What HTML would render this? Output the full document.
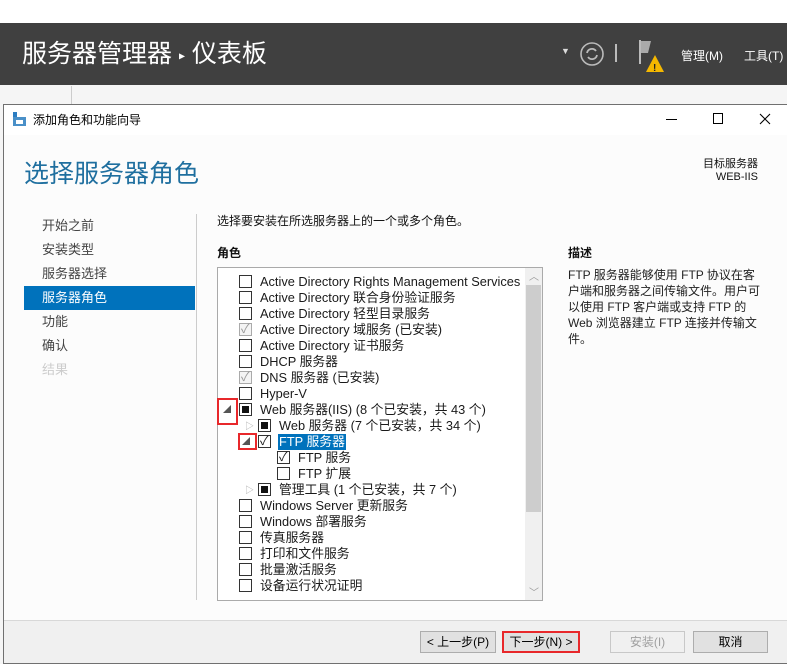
<!DOCTYPE html>
<html><head><meta charset="utf-8"><style>
*{margin:0;padding:0;box-sizing:border-box}
body{width:787px;height:664px;overflow:hidden;background:#fff;font-family:"Liberation Sans","Noto Sans CJK SC",sans-serif;position:relative}
.a{position:absolute;white-space:nowrap}
.hdr{left:0;top:23px;width:787px;height:62px;background:#404040}
.cb{position:absolute;width:13px;height:13px;border:1px solid #333;background:#fff}
.cb.g{border-color:#aaa;background:#f4f4f4}
.cb.f::after{content:"";position:absolute;left:2px;top:2px;width:7px;height:7px;background:#111}
.t{position:absolute;font-size:12.8px;color:#1a1a1a;line-height:16px}
.btn{position:absolute;top:631px;height:22px;border:1px solid #adadad;background:#e1e1e1;font-size:12px;text-align:center;line-height:20px;color:#000}
</style></head><body>
<div class="a hdr"></div>
<div class="a" style="left:22px;top:37px;font-size:25px;color:#fff;line-height:34px">服务器管理器 <span style="font-size:12px;vertical-align:middle">▸</span> 仪表板</div>
<div class="a" style="left:561px;top:46px;color:#ddd;font-size:9px">▼</div>
<svg class="a" style="left:579px;top:40px" width="26" height="28"><circle cx="13" cy="14" r="11" fill="none" stroke="#bbb" stroke-width="1.6"/><path d="M8 13a5 5 0 0 1 9-2M18 15a5 5 0 0 1-9 2" stroke="#bbb" stroke-width="1.8" fill="none"/></svg>
<div class="a" style="left:615px;top:44px;width:2px;height:18px;background:#bbb"></div>
<svg class="a" style="left:636px;top:38px" width="34" height="40"><path d="M4 2v24" stroke="#bbb" stroke-width="2"/><path d="M5 3h10l-3 12H5z" fill="#aaa"/><path d="M19 17l9 17H10z" fill="#f5b800"/><text x="17" y="33" font-size="10" font-weight="bold" fill="#222">!</text></svg>
<div class="a" style="left:681px;top:47px;font-size:12px;color:#fff">管理(M)</div>
<div class="a" style="left:744px;top:47px;font-size:12px;color:#fff">工具(T)</div>
<div class="a" style="left:0;top:85px;width:787px;height:20px;background:#f5f5f5"></div>
<div class="a" style="left:71px;top:86px;width:1px;height:18px;background:#ccc"></div>
<div class="a" style="left:0;top:104px;width:3px;height:560px;background:#f5f5f5"></div>
<div class="a" style="left:3px;top:104px;width:784px;height:560px;background:#fcfcfc;border:1px solid #707070;border-right:none"></div>
<div class="a" style="left:4px;top:105px;width:783px;height:30px;background:#fff"></div>
<svg class="a" style="left:12px;top:111px" width="16" height="16"><rect x="1" y="1" width="4" height="5" fill="#2b7cc1"/><rect x="1" y="6" width="13" height="9" fill="#4a90c8"/><rect x="4" y="9" width="7" height="4" fill="#fff"/></svg>
<div class="a" style="left:33px;top:111px;font-size:12px;color:#000">添加角色和功能向导</div>
<div class="a" style="left:666px;top:119px;width:11px;height:1px;background:#000"></div>
<div class="a" style="left:713px;top:113px;width:10px;height:11px;border:1px solid #000"></div>
<svg class="a" style="left:759px;top:113px" width="12" height="12"><path d="M1 1L11 11M11 1L1 11" stroke="#000" stroke-width="1.1"/></svg>
<div class="a" style="left:24px;top:157px;font-size:25px;color:#1f6f9f;line-height:34px">选择服务器角色</div>
<div class="a" style="left:690px;top:158px;width:68px;text-align:right;font-size:11px;color:#111;line-height:13px">目标服务器<br>WEB-IIS</div>
<div class="a" style="left:24px;top:286px;width:171px;height:24px;background:#0072bc"></div>
<div class="a" style="left:42px;top:214px;font-size:13px;color:#444;line-height:24px">开始之前<br>安装类型<br>服务器选择<br><span style="color:#fff">服务器角色</span><br>功能<br>确认<br><span style="color:#ccc">结果</span></div>
<div class="a" style="left:196px;top:214px;width:1px;height:386px;background:#ccc"></div>
<div class="a" style="left:217px;top:212px;font-size:12px;color:#111">选择要安装在所选服务器上的一个或多个角色。</div>
<div class="a" style="left:217px;top:244px;font-size:12px;font-weight:bold;color:#111">角色</div>
<div class="a" style="left:568px;top:244px;font-size:12px;font-weight:bold;color:#111">描述</div>
<div class="a" style="left:568px;top:267px;width:195px;font-size:12px;color:#222;line-height:16px;white-space:normal">FTP 服务器能够使用 FTP 协议在客户端和服务器之间传输文件。用户可以使用 FTP 客户端或支持 FTP 的 Web 浏览器建立 FTP 连接并传输文件。</div>
<div class="a" style="left:217px;top:267px;width:326px;height:334px;background:#fff;border:1px solid #aaa"></div>
<div class="a" style="left:525px;top:268px;width:17px;height:332px;background:#f0f0f0"></div>
<div class="a" style="left:526px;top:285px;width:15px;height:227px;background:#cdcdcd"></div>
<div class="a" style="left:529px;top:268px;font-size:10px;color:#999">︿</div>
<div class="a" style="left:529px;top:584px;font-size:10px;color:#999">﹀</div>
<div class="cb" style="left:239px;top:275px"></div><div class="t" style="left:260px;top:274px">Active Directory Rights Management Services</div>
<div class="cb" style="left:239px;top:291px"></div><div class="t" style="left:260px;top:290px">Active Directory 联合身份验证服务</div>
<div class="cb" style="left:239px;top:307px"></div><div class="t" style="left:260px;top:306px">Active Directory 轻型目录服务</div>
<div class="cb g" style="left:239px;top:323px"></div><div class="t" style="left:241px;top:321px;color:#999">✓</div><div class="t" style="left:260px;top:322px">Active Directory 域服务 (已安装)</div>
<div class="cb" style="left:239px;top:339px"></div><div class="t" style="left:260px;top:338px">Active Directory 证书服务</div>
<div class="cb" style="left:239px;top:355px"></div><div class="t" style="left:260px;top:354px">DHCP 服务器</div>
<div class="cb g" style="left:239px;top:371px"></div><div class="t" style="left:241px;top:369px;color:#999">✓</div><div class="t" style="left:260px;top:370px">DNS 服务器 (已安装)</div>
<div class="cb" style="left:239px;top:387px"></div><div class="t" style="left:260px;top:386px">Hyper-V</div>
<div class="t" style="left:223px;top:402px;font-size:8px;color:#555">◢</div>
<div class="cb f" style="left:239px;top:403px"></div><div class="t" style="left:260px;top:402px">Web 服务器(IIS) (8 个已安装，共 43 个)</div>
<div class="t" style="left:245px;top:418px;font-size:9px;color:#aaa">▷</div>
<div class="cb f" style="left:258px;top:419px"></div><div class="t" style="left:279px;top:418px">Web 服务器 (7 个已安装，共 34 个)</div>
<div class="t" style="left:242px;top:434px;font-size:8px;color:#555">◢</div>
<div class="cb" style="left:258px;top:435px"></div><div class="t" style="left:260px;top:433px">✓</div>
<div class="t" style="left:278px;top:434px;background:#0072bc;color:#fff;padding:0 1px">FTP 服务器</div>
<div class="cb" style="left:277px;top:451px"></div><div class="t" style="left:279px;top:449px">✓</div><div class="t" style="left:298px;top:450px">FTP 服务</div>
<div class="cb" style="left:277px;top:467px"></div><div class="t" style="left:298px;top:466px">FTP 扩展</div>
<div class="t" style="left:245px;top:482px;font-size:9px;color:#aaa">▷</div>
<div class="cb f" style="left:258px;top:483px"></div><div class="t" style="left:279px;top:482px">管理工具 (1 个已安装，共 7 个)</div>
<div class="cb" style="left:239px;top:499px"></div><div class="t" style="left:260px;top:498px">Windows Server 更新服务</div>
<div class="cb" style="left:239px;top:515px"></div><div class="t" style="left:260px;top:514px">Windows 部署服务</div>
<div class="cb" style="left:239px;top:531px"></div><div class="t" style="left:260px;top:530px">传真服务器</div>
<div class="cb" style="left:239px;top:547px"></div><div class="t" style="left:260px;top:546px">打印和文件服务</div>
<div class="cb" style="left:239px;top:563px"></div><div class="t" style="left:260px;top:562px">批量激活服务</div>
<div class="cb" style="left:239px;top:579px"></div><div class="t" style="left:260px;top:578px">设备运行状况证明</div>
<div class="a" style="left:217px;top:398px;width:21px;height:27px;border:2px solid #e8282b"></div>
<div class="a" style="left:238px;top:433px;width:19px;height:17px;border:2px solid #e8282b"></div>
<div class="a" style="left:4px;top:620px;width:783px;height:43px;background:#f0f0f0;border-top:1px solid #d8d8d8"></div>
<div class="btn" style="left:420px;width:76px">&lt; 上一步(P)</div>
<div class="btn" style="left:502px;width:78px;border:2px solid #e8282b;line-height:18px">下一步(N) &gt;</div>
<div class="btn" style="left:610px;width:75px;background:#f0f0f0;border-color:#c8c8c8;color:#a0a0a0">安装(I)</div>
<div class="btn" style="left:693px;width:75px">取消</div>
</body></html>
